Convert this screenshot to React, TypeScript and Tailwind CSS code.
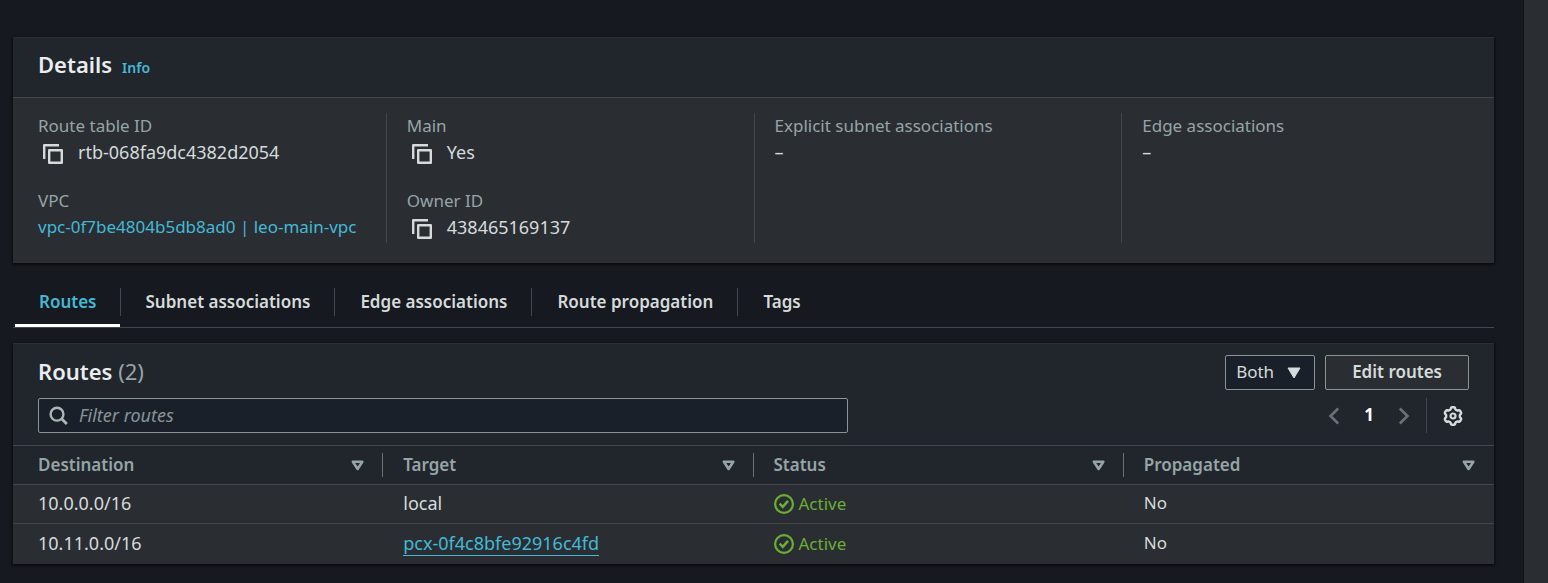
import React from "react";
import type { ReactNode } from "react";

function CopyIcon() {
  return (
    <svg width="20" height="20" viewBox="0 0 20 20" fill="none" stroke="currentColor" strokeWidth="2.4" strokeLinejoin="round">
      <path d="M1.2 15V1.2H16" />
      <rect x="6.2" y="6.2" width="12.6" height="12.6" />
    </svg>
  );
}

function SearchIcon() {
  return (
    <svg width="20" height="20" viewBox="0 0 20 20" fill="none" stroke="currentColor" strokeWidth="2.4">
      <circle cx="8" cy="8.2" r="6.4" />
      <path d="M12.6 12.8l5.2 5.2" strokeWidth="2.9" />
    </svg>
  );
}

function CheckCircleIcon() {
  return (
    <svg width="20" height="20" viewBox="0 0 20 20" fill="none" stroke="currentColor" strokeWidth="2.2">
      <circle cx="10" cy="10" r="8.9" />
      <path d="M5.6 9.7l3.2 3.2L14 6.9" strokeWidth="2.5" />
    </svg>
  );
}

function SortIcon() {
  return (
    <svg width="13" height="11" viewBox="0 0 13 11" fill="none" stroke="currentColor" strokeWidth="2.6" strokeLinejoin="round">
      <path d="M1.9 1.7h9.4L6.6 9z" />
    </svg>
  );
}

function Chevron({ direction }: { direction: "left" | "right" }) {
  return (
    <svg width="12" height="18" viewBox="0 0 12 18" fill="none" stroke="currentColor" strokeWidth="2.6">
      <path d={direction === "left" ? "M10.2 1.5L2.5 9l7.7 7.5" : "M1.8 1.5L9.5 9l-7.7 7.5"} />
    </svg>
  );
}

const gearPath =
  Array.from({ length: 120 }, (_, i) => {
    const angle = (i / 120) * Math.PI * 2;
    const radius = 7.8 + Math.tanh(0.3 - 2.2 * Math.cos(6 * angle));
    return `${i ? "L" : "M"}${(10 + radius * Math.cos(angle)).toFixed(2)} ${(10 + radius * Math.sin(angle)).toFixed(2)}`;
  }).join("") + "Z";

function GearIcon() {
  return (
    <svg width="20" height="20" viewBox="0 0 20 20" fill="none" stroke="currentColor" strokeWidth="2.4" strokeLinejoin="round">
      <path d={gearPath} />
      <circle cx="10" cy="10" r="2.5" strokeWidth="2.2" />
    </svg>
  );
}

function Field({ label, copy = false, children }: { label: string; copy?: boolean; children: ReactNode }) {
  return (
    <div>
      <dt className="text-[17px] leading-[25px] text-[#95a5a6]">{label}</dt>
      <dd className="flex h-[30px] items-center pb-0.5 text-lg leading-7">
        {copy && (
          <button type="button" aria-label={`Copy ${label}`} className="mr-[15px] ml-[5px] pt-1">
            <CopyIcon />
          </button>
        )}
        {children}
      </dd>
    </div>
  );
}

const columnClass = "flex flex-col gap-5 pl-5";
const dividedColumnClass = "flex flex-col gap-5 border-l border-[#414750] pl-5";
const panelClass = "border-t border-[#2c3036] bg-[#2a2e33] shadow-[0_1px_2px_1px_rgba(0,0,0,0.5)]";

function Details() {
  return (
    <section className={panelClass}>
      <header className="flex h-[60px] items-center gap-2.5 border-b border-[#414750] bg-[#21252c] px-[25px] pb-2">
        <h2 className="text-[22px] leading-7 font-semibold text-[#eaeded]">Details</h2>
        <a href="#info" className="pt-2 text-sm leading-5 font-semibold text-[#44b9d6]">
          Info
        </a>
      </header>
      <dl className="grid grid-cols-4 px-[5px] pt-[15px] pb-5">
        <div className={columnClass}>
          <Field label="Route table ID" copy>
            rtb-068fa9dc4382d2054
          </Field>
          <Field label="VPC">
            <a href="#vpc" className="text-[17px] whitespace-nowrap text-[#44b9d6]">
              vpc-0f7be4804b5db8ad0 | leo-main-vpc
            </a>
          </Field>
        </div>
        <div className={dividedColumnClass}>
          <Field label="Main" copy>
            Yes
          </Field>
          <Field label="Owner ID" copy>
            438465169137
          </Field>
        </div>
        <div className={dividedColumnClass}>
          <Field label="Explicit subnet associations">–</Field>
        </div>
        <div className={dividedColumnClass}>
          <Field label="Edge associations">–</Field>
        </div>
      </dl>
    </section>
  );
}

const tabs = ["Routes", "Subnet associations", "Edge associations", "Route propagation", "Tags"];

function Tabs() {
  return (
    <div role="tablist" className="flex h-[65px] border-b border-[#414750] pl-0.5">
      {tabs.map((tab, i) => (
        <button
          key={tab}
          type="button"
          role="tab"
          aria-selected={i === 0}
          className={
            i === 0
              ? "flex items-center border-b-[3px] border-white pt-4 text-[#44b9d6]"
              : "flex items-center border-b-[3px] border-transparent pt-4 text-[#d5dbdb]"
          }
        >
          <span
            className={
              i === 0
                ? "pr-[23px] pl-6 text-[17px] leading-7 font-semibold"
                : "border-l border-[#414750] pr-6 pl-[25px] text-[17px] leading-7 font-semibold"
            }
          >
            {tab}
          </span>
        </button>
      ))}
    </div>
  );
}

const headings = ["Destination", "Target", "Status", "Propagated"];
const routes = [
  { destination: "10.0.0.0/16", target: "local", linked: false },
  { destination: "10.11.0.0/16", target: "pcx-0f4c8bfe92916c4fd", linked: true },
];

function Routes() {
  return (
    <section className={panelClass}>
      <div className="flex flex-col gap-2 bg-[#21252c] px-[25px] pt-[11px] pb-3">
        <div className="flex items-center justify-between">
          <h2 className="pb-1 text-[22px] leading-7 font-semibold text-[#eaeded]">
            Routes <span className="font-normal text-[#95a5a6]">(2)</span>
          </h2>
          <div className="flex gap-2.5">
            <div className="relative">
              <select
                aria-label="Filter by route type"
                className="h-[35px] w-[90px] appearance-none rounded-xs border border-[#879596] bg-[#1a2029] pb-0.5 pl-2.5 text-[17px] text-[#d5dbdb]"
              >
                <option>Both</option>
              </select>
              <svg className="pointer-events-none absolute top-3 right-3.5" width="14" height="12" viewBox="0 0 14 12">
                <path d="M1 1h12L7 11z" fill="#d5dbdb" stroke="#d5dbdb" strokeLinejoin="round" />
              </svg>
            </div>
            <button
              type="button"
              className="h-[35px] rounded-xs border border-[#879596] bg-[#2a2e33] px-[26px] pb-0.5 text-[17px] leading-7 font-semibold text-[#d5dbdb]"
            >
              Edit routes
            </button>
          </div>
        </div>
        <div className="flex items-center justify-between">
          <label className="flex h-[35px] w-[810px] items-center gap-2.5 rounded-xs border border-[#879596] bg-[#1a2029] pl-2.5 text-[#aab7b8]">
            <SearchIcon />
            <input
              type="text"
              aria-label="Filter routes"
              placeholder="Filter routes"
              className="min-w-0 flex-1 bg-transparent pb-0.5 text-lg leading-7 italic outline-none placeholder:text-[#879596]"
            />
          </label>
          <div className="flex h-[35px] items-center">
            <button type="button" aria-label="Previous page" className="text-[#687078]">
              <Chevron direction="left" />
            </button>
            <button type="button" aria-current="page" className="w-[58px] pb-0.5 text-[17px] leading-7 font-bold text-white">
              1
            </button>
            <button type="button" aria-label="Next page" className="mr-4 text-[#687078]">
              <Chevron direction="right" />
            </button>
            <div className="flex h-full items-center border-l border-[#414750] pr-1.5 pl-4">
              <button type="button" aria-label="Preferences" className="text-[#d5dbdb]">
                <GearIcon />
              </button>
            </div>
          </div>
        </div>
      </div>
      <table className="w-full table-fixed border-collapse text-left text-lg leading-6">
        <thead>
          <tr className="h-[39px] border-y border-[#414750] bg-[#21252c] text-[17px] text-[#95a5a6]">
            {headings.map((heading, i) => (
              <th key={heading} scope="col" className="p-0 font-semibold">
                <div
                  className={
                    i === headings.length - 1
                      ? "flex items-center justify-between pr-[19px] pl-5"
                      : i === 0
                        ? "flex items-center justify-between border-r border-[#687078] pr-[18px] pl-[25px]"
                        : "flex items-center justify-between border-r border-[#687078] pr-[18px] pl-5"
                  }
                >
                  {heading}
                  <SortIcon />
                </div>
              </th>
            ))}
          </tr>
        </thead>
        <tbody>
          {routes.map((route) => (
            <tr key={route.destination} className="h-[39px] border-b border-[#414750] last:h-10 last:border-b-0">
              <td className="pt-0 pr-5 pb-0.5 pl-[25px]">{route.destination}</td>
              <td className="px-5 pt-0 pb-0.5">
                {route.linked ? (
                  <a href="#target" className="border-b border-[#44b9d6] text-[#44b9d6]">
                    {route.target}
                  </a>
                ) : (
                  route.target
                )}
              </td>
              <td className="px-5 py-0">
                <span className="flex items-center gap-[5px] text-[17px] text-[#6aaf35]">
                  <CheckCircleIcon />
                  Active
                </span>
              </td>
              <td className="px-5 pt-0 pb-0.5 text-[17px]">No</td>
            </tr>
          ))}
        </tbody>
      </table>
    </section>
  );
}

export default function App() {
  return (
    <div className="flex min-h-screen bg-[#16191f] font-['Noto_Sans','Open_Sans',sans-serif] text-[#d5dbdb]">
      <main className="min-w-0 flex-1 pt-[37px] pr-[29px] pl-[13px]">
        <Details />
        <Tabs />
        <div className="pt-[15px]">
          <Routes />
        </div>
      </main>
      <aside aria-label="Help panel" className="w-[25px] border-l border-[#0f1217] bg-[#2a2e33]" />
    </div>
  );
}
